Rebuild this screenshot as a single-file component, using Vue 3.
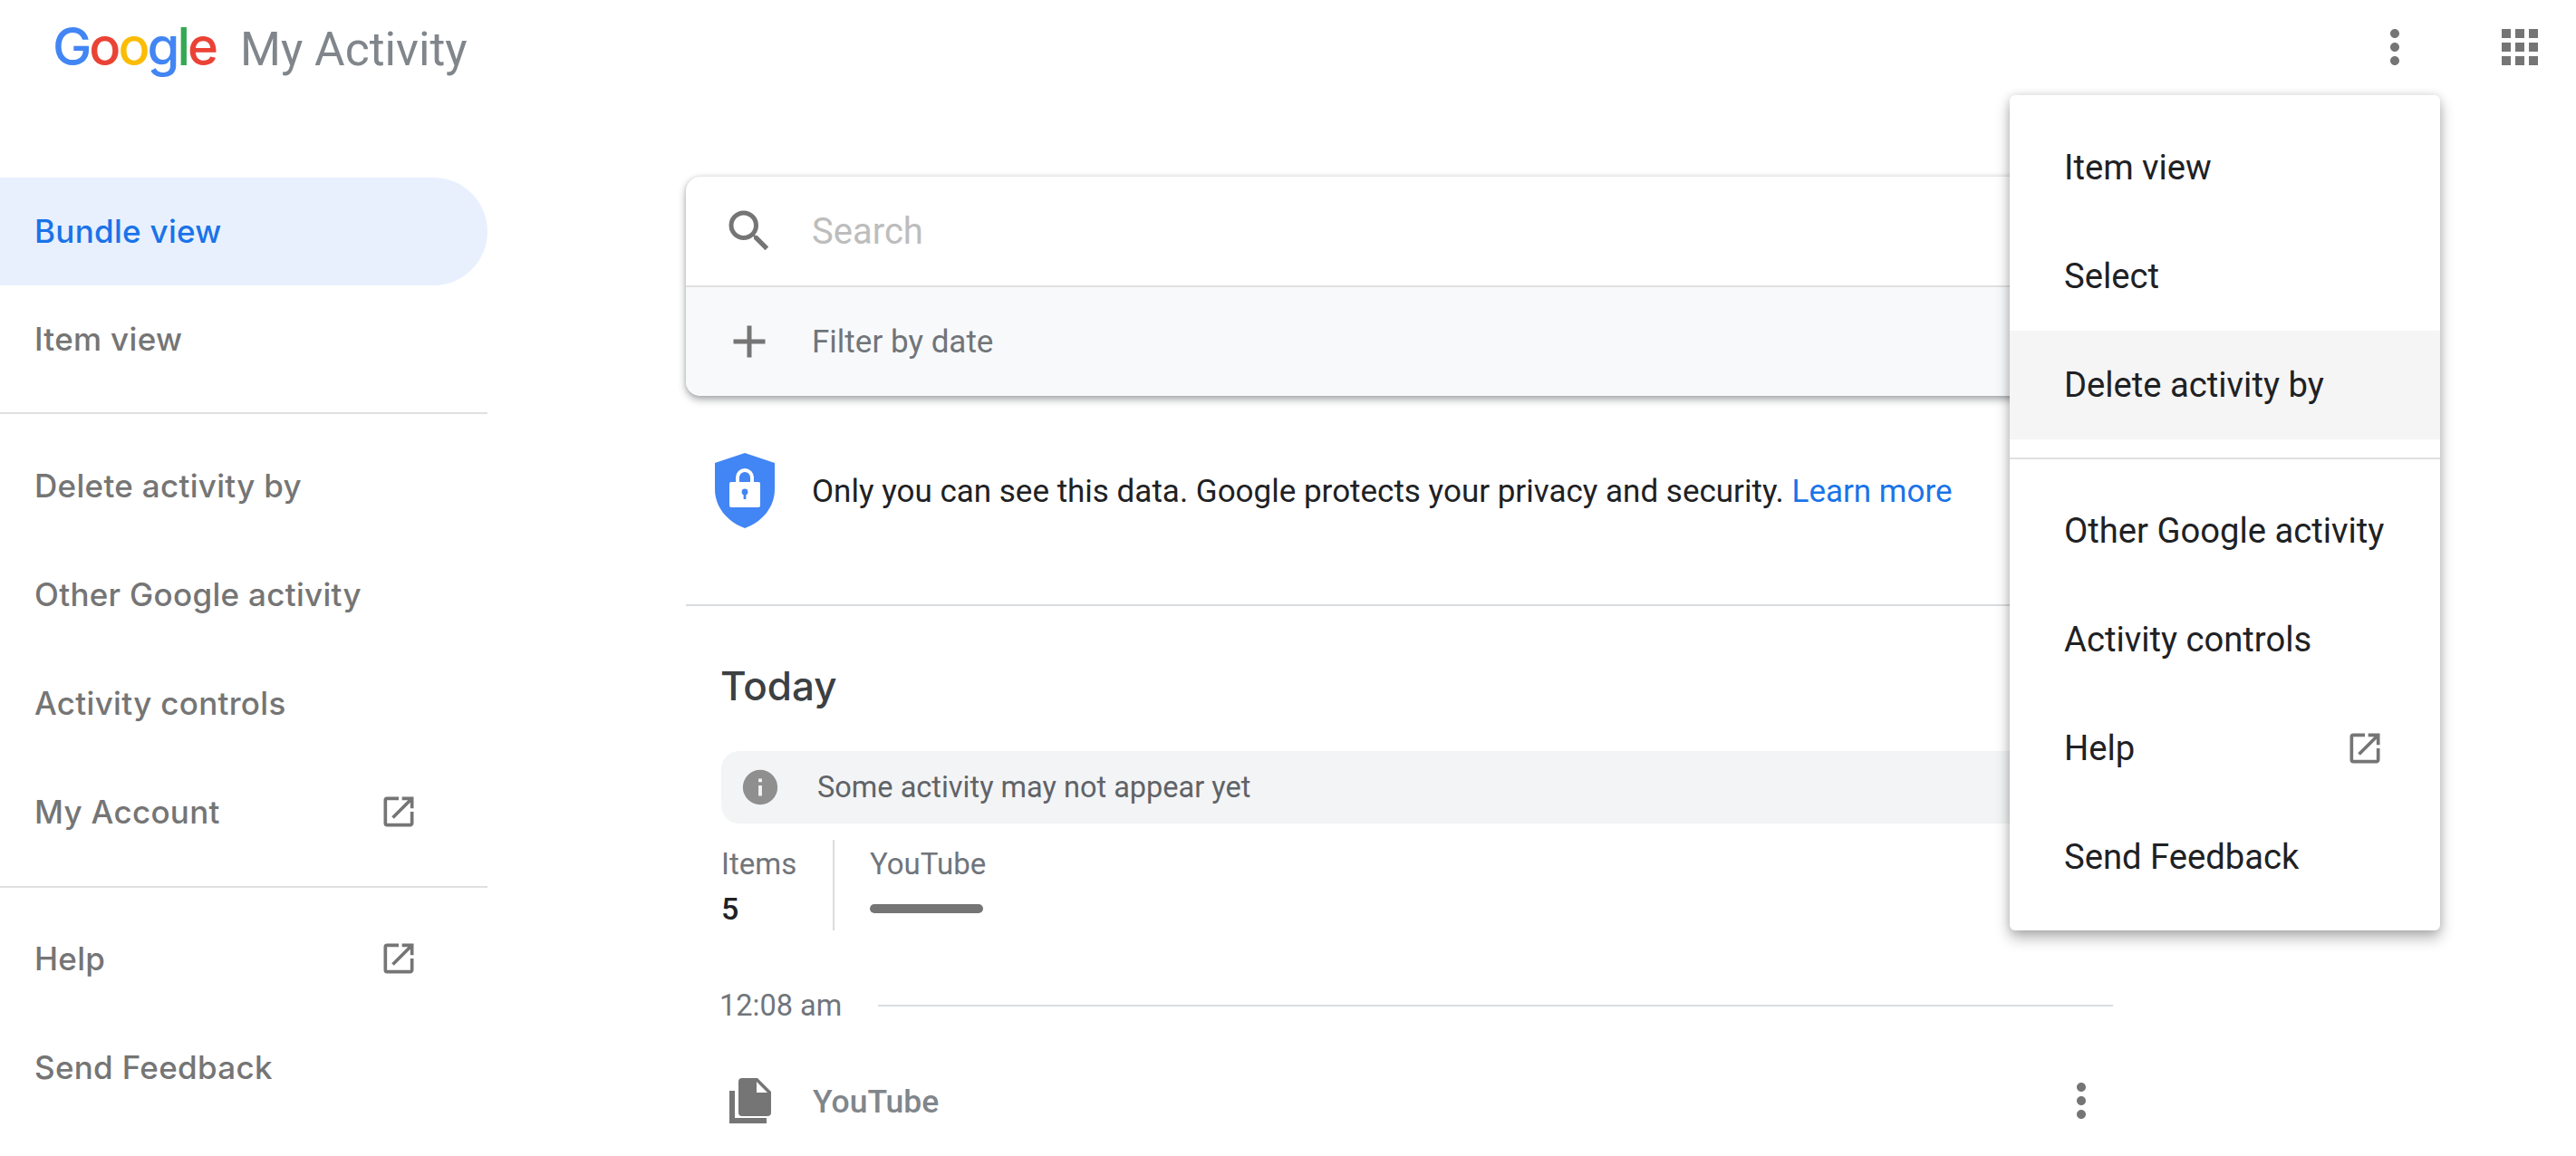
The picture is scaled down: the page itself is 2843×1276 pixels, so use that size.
<script setup>
const open = 'M19 19H5V5h7V3H5a2 2 0 0 0-2 2v14a2 2 0 0 0 2 2h14c1.1 0 2-.9 2-2v-7h-2v7zM14 3v2h3.59l-9.83 9.83 1.41 1.41L19 6.41V10h2V3h-7z'
const vert = 'M12 8c1.1 0 2-.9 2-2s-.9-2-2-2-2 .9-2 2 .9 2 2 2zm0 2c-1.1 0-2 .9-2 2s.9 2 2 2 2-.9 2-2-.9-2-2-2zm0 6c-1.1 0-2 .9-2 2s.9 2 2 2 2-.9 2-2-.9-2-2-2z'
const logo = [['G', '#4285f4'], ['o', '#ea4335'], ['o', '#fbbc05'], ['g', '#4285f4'], ['l', '#34a853'], ['e', '#ea4335']]
const sideA = ['Delete activity by', 'Other Google activity', 'Activity controls']
</script>

<template>
  <div class="page">
    <header class="top">
      <div class="brand">
        <span class="logo"><span v-for="(l, i) in logo" :key="i" :style="{ color: l[1] }">{{ l[0] }}</span></span>
        <span class="title">My Activity</span>
      </div>
      <div class="top-icons">
        <svg class="i60" viewBox="0 0 24 24"><path :d="vert" /></svg>
        <svg class="i60" viewBox="0 0 24 24"><path d="M4 8h4V4H4v4zm6 12h4v-4h-4v4zm-6 0h4v-4H4v4zm0-6h4v-4H4v4zm6 0h4v-4h-4v4zm6-10v4h4V4h-4zm-6 4h4V4h-4v4zm6 6h4v-4h-4v4zm0 6h4v-4h-4v4z" /></svg>
      </div>
    </header>

    <div class="body">
      <nav class="side">
        <div class="s-row active">Bundle view</div>
        <div class="s-row">Item view</div>
        <div class="s-div"></div>
        <div v-for="t in sideA" :key="t" class="s-row">{{ t }}</div>
        <div class="s-row">My Account<svg class="ext" viewBox="0 0 24 24"><path :d="open" /></svg></div>
        <div class="s-div second"></div>
        <div class="s-row">Help<svg class="ext" viewBox="0 0 24 24"><path :d="open" /></svg></div>
        <div class="s-row">Send Feedback</div>
      </nav>

      <main class="main">
        <section class="card">
          <div class="search">
            <svg class="i60" viewBox="0 0 24 24"><path d="M15.5 14h-.79l-.28-.27A6.47 6.47 0 0 0 16 9.5 6.5 6.5 0 1 0 9.5 16c1.61 0 3.09-.59 4.23-1.57l.27.28v.79l5 4.99L20.49 19l-4.99-5zm-6 0C7.01 14 5 11.99 5 9.5S7.01 5 9.5 5 14 7.01 14 9.5 11.99 14 9.5 14z" /></svg>
            <span class="ph">Search</span>
          </div>
          <div class="filter">
            <svg class="i60" viewBox="0 0 24 24"><path d="M19 13h-6v6h-2v-6H5v-2h6V5h2v6h6v2z" /></svg>
            <span>Filter by date</span>
          </div>
        </section>

        <div class="privacy">
          <svg class="shield" viewBox="0 0 66 83">
            <path fill="#4285f4" d="M33 0 66 11v29c0 20-14 36-33 43C14 76 0 60 0 40V11z" />
            <path fill="none" stroke="#fff" stroke-width="4" d="M25 33v-6a8 8 0 0 1 16 0v6" />
            <rect x="16" y="32" width="34" height="28" rx="2" fill="#fff" />
            <circle cx="33" cy="43" r="3.4" fill="#4285f4" />
            <rect x="31.6" y="44" width="2.8" height="7" fill="#4285f4" />
          </svg>
          <p>Only you can see this data. Google protects your privacy and security. <a>Learn more</a></p>
        </div>

        <div class="rule"></div>

        <section class="day">
          <h2>Today</h2>
          <div class="banner">
            <svg class="info" viewBox="0 0 24 24"><path d="M12 2a10 10 0 1 0 0 20 10 10 0 0 0 0-20zm1 15h-2v-6h2v6zm0-8h-2V7h2v2z" /></svg>
            <span>Some activity may not appear yet</span>
          </div>
          <div class="stats">
            <div class="st-items">
              <div class="st-label">Items</div>
              <div class="st-num">5</div>
            </div>
            <div class="st-yt">
              <div class="st-label">YouTube</div>
              <div class="st-bar-wrap"><div class="st-bar"></div></div>
            </div>
          </div>
          <div class="time">
            <span>12:08 am</span>
            <div class="time-line"></div>
          </div>
          <div class="entry">
            <svg class="doc" viewBox="0 0 46 50">
              <path d="M14 0h17l15 15v23a4 4 0 0 1-4 4H14a4 4 0 0 1-4-4V4a4 4 0 0 1 4-4zm16 4v12h12z" fill-rule="evenodd" />
              <path d="M0 14h6v30h35v6H0z" />
            </svg>
            <span class="entry-name">YouTube</span>
            <svg class="i60 entry-more" viewBox="0 0 24 24"><path :d="vert" /></svg>
          </div>
        </section>
      </main>
    </div>

    <div class="menu">
      <div class="m-row">Item view</div>
      <div class="m-row">Select</div>
      <div class="m-row hover">Delete activity by</div>
      <div class="m-div"></div>
      <div class="m-row">Other Google activity</div>
      <div class="m-row">Activity controls</div>
      <div class="m-row">Help<svg class="ext" viewBox="0 0 24 24"><path :d="open" /></svg></div>
      <div class="m-row">Send Feedback</div>
    </div>
  </div>
</template>

<style>
html, body { margin: 0; height: 1276px; overflow: hidden; background: #fff; }
</style>

<style scoped>
.page { position: relative; width: 2843px; height: 1276px; overflow: hidden; background: #fff; font-family: Roboto, "Liberation Sans", sans-serif; color: #202124; }
svg { display: block; flex: none; fill: #757575; }
.i60 { width: 60px; height: 60px; }
.ext { width: 44px; height: 44px; }

.top { height: 104px; display: flex; justify-content: space-between; align-items: center; padding: 0 32px 0 58px; }
.brand { display: flex; align-items: baseline; margin-top: -3px; }
.logo { font-family: Inter, sans-serif; font-weight: 500; font-size: 58px; letter-spacing: -3px; line-height: 80px; width: 177px; }
.title { font-size: 51.5px; font-weight: 400; color: #80868b; margin-left: 30px; }
.top-icons { display: flex; gap: 78px; }

.body { display: flex; }
.side { width: 538px; flex: none; padding-top: 92px; font-family: Inter, sans-serif; font-weight: 500; font-size: 35px; letter-spacing: .3px; color: #757575; }
.s-row { height: 120px; display: flex; align-items: center; justify-content: space-between; padding: 0 76px 2px 38px; box-sizing: border-box; }
.s-row.active { height: 119px; background: #e8f0fe; color: #1a73e8; border-radius: 0 60px 60px 0; }
.s-div { height: 2px; background: #e0e0e0; margin: 20px 0; }
.s-div.second { margin: 21px 0 19px; }

.main { width: 1575px; margin-left: 219px; padding-top: 91px; }
.card { border-radius: 16px; overflow: hidden; box-shadow: 0 4px 8px rgba(60, 64, 67, .45), 0 0 4px rgba(60, 64, 67, .15); background: #fff; }
.search { height: 120px; display: flex; align-items: center; gap: 39px; padding-left: 40px; border-bottom: 2px solid #e0e0e0; }
.ph { font-size: 40px; color: #bdbdbd; }
.filter { height: 120px; display: flex; align-items: center; gap: 39px; padding-left: 40px; background: #f8f9fa; font-size: 35px; color: #70757a; }

.privacy { height: 208px; display: flex; align-items: center; gap: 41px; padding-left: 32px; margin-bottom: 22px; }
.shield { width: 66px; height: 83px; }
.privacy p { margin: 2px 0 0; font-size: 35px; }
.privacy a { color: #1a73e8; }
.rule { height: 2px; background: #dadce0; }

.day { padding-left: 39px; }
.day h2 { margin: 58px 0 0 -1px; height: 60px; line-height: 60px; font-family: Inter, sans-serif; font-weight: 500; font-size: 44px; color: #3c4043; }
.banner { margin-top: 42px; height: 80px; border-radius: 20px; background: #f3f4f5; display: flex; align-items: center; gap: 40px; padding-left: 20px; font-size: 32.5px; color: #5f6368; }
.info { width: 46px; height: 46px; fill: #8f8f8f; }
.stats { margin-top: 18px; height: 100px; display: flex; }
.st-items { width: 123px; border-right: 2px solid #dadce0; margin-right: -1px; }
.st-yt { padding-left: 40px; width: 126px; }
.st-label { height: 52px; line-height: 54px; font-size: 33px; color: #70757a; }
.st-num { height: 48px; line-height: 48px; font-size: 34px; font-weight: 500; color: #202124; }
.st-bar-wrap { height: 48px; display: flex; align-items: center; }
.st-bar { width: 125px; height: 10px; border-radius: 5px; background: #757575; }
.time { margin-top: 58px; margin-left: -2px; height: 50px; display: flex; align-items: center; gap: 40px; font-size: 32.5px; color: #70757a; }
.time-line { flex: 1; height: 2px; background: #dadce0; }
.entry { margin-top: 49px; height: 60px; display: flex; align-items: center; padding: 2px 5px 0 9px; box-sizing: content-box; }
.doc { width: 46px; height: 50px; margin-top: -2px; }
.entry-name { margin-left: 46px; font-size: 35.5px; font-weight: 500; color: #80868b; }
.entry-more { margin-left: auto; margin-top: -2px; }

.menu { position: absolute; left: 2218px; top: 105px; width: 475px; padding: 20px 0 21px; border-radius: 6px; background: #fff; box-shadow: 0 8px 16px rgba(0, 0, 0, .3), 0 0 10px rgba(0, 0, 0, .12); font-size: 38.2px; color: #202124; box-sizing: border-box; }
.m-row { height: 120px; display: flex; align-items: center; justify-content: space-between; padding: 0 61px 0 60px; box-sizing: border-box; }
.m-row.hover { background: #f5f5f5; }
.m-div { height: 2px; background: #e0e0e0; margin: 20px 0 19px; }
</style>
